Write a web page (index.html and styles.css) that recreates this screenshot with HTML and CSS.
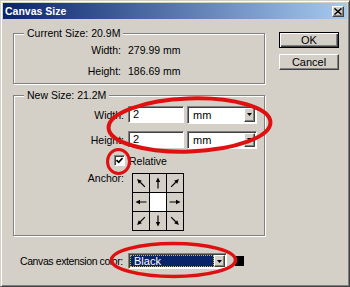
FILE: index.html
```html
<!DOCTYPE html>
<html>
<head>
<meta charset="utf-8">
<link rel="stylesheet" href="styles.css">
</head>
<body>
<div class="window">
  <div class="titlebar">
    <span class="title">Canvas Size</span>
    <span class="close"><svg viewBox="0 0 8 7" width="8" height="7"><path d="M0.5 0.5 L7.5 6.5 M7.5 0.5 L0.5 6.5" stroke="#000" stroke-width="1.5"/></svg></span>
  </div>
  <div class="content">
    <div class="main">
      <div class="group g1">
        <div class="legend">Current Size: 20.9M</div>
        <div class="kv">
          <span class="k">Width:</span><span class="v">279.99 mm</span>
          <span class="k">Height:</span><span class="v">186.69 mm</span>
        </div>
      </div>
      <div class="group g2">
        <div class="legend">New Size: 21.2M</div>
        <div class="fields">
          <div class="frow">
            <span class="flabel">Width:</span>
            <span class="input">2</span>
            <span class="select"><span class="sel-text">mm</span><span class="sel-btn"><svg viewBox="0 0 5 3" width="5" height="3"><path d="M0 0H5L2.5 3Z"/></svg></span></span>
          </div>
          <div class="frow">
            <span class="flabel">Height:</span>
            <span class="input">2</span>
            <span class="select"><span class="sel-text">mm</span><span class="sel-btn"><svg viewBox="0 0 5 3" width="5" height="3"><path d="M0 0H5L2.5 3Z"/></svg></span></span>
          </div>
          <div class="crow">
            <span class="checkbox"><svg viewBox="0 0 7 7" width="7" height="7"><path d="M0.5 3 L2.7 5.3 L6.5 1" fill="none" stroke="#000" stroke-width="1.6"/></svg></span>
            <span class="ctext">Relative</span>
          </div>
          <div class="arow">
            <span class="alabel">Anchor:</span>
            <div class="anchor">
              <span class="cell"><svg class="arr d-nw" viewBox="0 0 12 12"><path d="M6 0.5 L3.8 5 L8.2 5 Z"/><path d="M6 5 V11.5" stroke="#000" stroke-width="1.2"/></svg></span>
              <span class="cell"><svg class="arr d-n" viewBox="0 0 12 12"><path d="M6 0.5 L3.8 5 L8.2 5 Z"/><path d="M6 5 V11.5" stroke="#000" stroke-width="1.2"/></svg></span>
              <span class="cell"><svg class="arr d-ne" viewBox="0 0 12 12"><path d="M6 0.5 L3.8 5 L8.2 5 Z"/><path d="M6 5 V11.5" stroke="#000" stroke-width="1.2"/></svg></span>
              <span class="cell"><svg class="arr d-w" viewBox="0 0 12 12"><path d="M6 0.5 L3.8 5 L8.2 5 Z"/><path d="M6 5 V11.5" stroke="#000" stroke-width="1.2"/></svg></span>
              <span class="cell center"></span>
              <span class="cell"><svg class="arr d-e" viewBox="0 0 12 12"><path d="M6 0.5 L3.8 5 L8.2 5 Z"/><path d="M6 5 V11.5" stroke="#000" stroke-width="1.2"/></svg></span>
              <span class="cell"><svg class="arr d-sw" viewBox="0 0 12 12"><path d="M6 0.5 L3.8 5 L8.2 5 Z"/><path d="M6 5 V11.5" stroke="#000" stroke-width="1.2"/></svg></span>
              <span class="cell"><svg class="arr d-s" viewBox="0 0 12 12"><path d="M6 0.5 L3.8 5 L8.2 5 Z"/><path d="M6 5 V11.5" stroke="#000" stroke-width="1.2"/></svg></span>
              <span class="cell"><svg class="arr d-se" viewBox="0 0 12 12"><path d="M6 0.5 L3.8 5 L8.2 5 Z"/><path d="M6 5 V11.5" stroke="#000" stroke-width="1.2"/></svg></span>
            </div>
          </div>
        </div>
      </div>
      <div class="ext-row">
        <span class="ext-label">Canvas extension color:</span>
        <span class="select ext-select"><span class="sel-text selected"><span class="focus">Black</span></span><span class="sel-btn"><svg viewBox="0 0 5 3" width="5" height="3"><path d="M0 0H5L2.5 3Z"/></svg></span></span>
        <span class="swatch"></span>
      </div>
    </div>
    <div class="buttons">
      <span class="btn default">OK</span>
      <span class="btn">Cancel</span>
    </div>
  </div>
  <svg class="marks" viewBox="0 0 350 287" width="350" height="287">
    <ellipse cx="189.5" cy="125" rx="81" ry="26.5" transform="rotate(-2 189.5 125)" fill="none" stroke="#e01010" stroke-width="4"/>
    <ellipse cx="118.5" cy="161.5" rx="11" ry="12" fill="none" stroke="#e01010" stroke-width="3"/>
    <ellipse cx="173.5" cy="260" rx="62" ry="16.5" fill="none" stroke="#e01010" stroke-width="3.5"/>
  </svg>
</div>
</body>
</html>
```

FILE: styles.css
```css
* { box-sizing: border-box; }

body {
  margin: 0;
  font-family: "Liberation Sans", Arial, sans-serif;
  font-size: 10.5px;
  color: #000;
}

.window {
  position: relative;
  width: 350px;
  height: 287px;
  background: #d4d0c8;
  border: 1px solid;
  border-color: #d4d0c8 #404040 #404040 #d4d0c8;
  box-shadow: inset 1px 1px 0 #fff, inset -1px -1px 0 #808080;
  padding: 2px;
}

.titlebar {
  display: flex;
  align-items: center;
  height: 16px;
  background: linear-gradient(to right, #0a246a, #a6caf0);
  padding-left: 2px;
}

.title {
  color: #fff;
  font-weight: bold;
  font-size: 10.5px;
  line-height: 12px;
}

.close {
  margin-left: auto;
  margin-right: 3px;
  width: 12px;
  height: 11px;
  display: flex;
  align-items: center;
  justify-content: center;
  background: #d4d0c8;
  border: 1px solid;
  border-color: #fff #404040 #404040 #fff;
  box-shadow: inset -1px -1px 0 #808080;
}

.content {
  display: flex;
  padding-left: 10px;
}

.main {
  width: 252px;
  padding-top: 14px;
}

.group {
  border: 1px solid #808080;
  box-shadow: 1px 1px 0 #fff, inset 1px 1px 0 #fff;
}

.legend {
  width: fit-content;
  margin: -7px 0 0 10px;
  padding: 0 3px;
  background: #d4d0c8;
  line-height: 12px;
}

.kv {
  display: grid;
  grid-template-columns: 107px auto;
  grid-auto-rows: 21px;
  column-gap: 7px;
  align-items: center;
  padding-bottom: 2px;
}

.k { text-align: right; }

.g2 { margin-top: 11px; }

.fields {
  padding-top: 5px;
  padding-bottom: 4px;
}

.frow {
  display: flex;
  align-items: center;
  height: 17px;
}

.frow + .frow { margin-top: 8px; }

.flabel {
  width: 110px;
  margin-right: 4px;
  text-align: right;
}

.input {
  width: 56px;
  height: 17px;
  background: #fff;
  border: 1px solid;
  border-color: #808080 #fff #fff #808080;
  box-shadow: inset 1px 1px 0 #404040;
  padding-left: 4px;
  line-height: 15px;
  font-size: 11px;
}

.select {
  display: flex;
  width: 70px;
  height: 18px;
  margin-left: 3px;
  background: #fff;
  border: 1px solid;
  border-color: #808080 #fff #fff #808080;
  box-shadow: inset 1px 1px 0 #404040;
  padding: 1px;
}

.sel-text {
  flex: 1;
  padding-left: 4px;
  line-height: 14px;
  font-size: 11px;
}

.sel-btn {
  width: 11px;
  display: flex;
  align-items: center;
  justify-content: center;
  background: #d4d0c8;
  border: 1px solid;
  border-color: #fff #404040 #404040 #fff;
  box-shadow: inset -1px -1px 0 #808080;
}

.crow {
  display: flex;
  align-items: center;
  margin-top: 7px;
  padding-left: 100px;
  height: 11px;
}

.checkbox {
  width: 11px;
  height: 11px;
  display: flex;
  align-items: center;
  justify-content: center;
  background: #fff;
  border: 1px solid;
  border-color: #808080 #fff #fff #808080;
  box-shadow: inset 1px 1px 0 #404040;
}

.ctext {
  margin-left: 4px;
  line-height: 12px;
}

.arow {
  display: flex;
  align-items: flex-start;
  margin-top: 7px;
}

.alabel {
  width: 110px;
  text-align: right;
  line-height: 12px;
  margin-top: -1px;
}

.anchor {
  margin-left: 8px;
  display: grid;
  grid-template-columns: repeat(3, 16px);
  grid-template-rows: repeat(3, 18px);
  gap: 1px;
  padding: 1px;
  background: #000;
}

.cell {
  display: flex;
  align-items: center;
  justify-content: center;
  background: #d4d0c8;
}

.cell.center { background: #fff; }

.arr {
  width: 12px;
  height: 12px;
}

.d-n { transform: rotate(0deg); }
.d-ne { transform: rotate(45deg); }
.d-e { transform: rotate(90deg); }
.d-se { transform: rotate(135deg); }
.d-s { transform: rotate(180deg); }
.d-sw { transform: rotate(225deg); }
.d-w { transform: rotate(270deg); }
.d-nw { transform: rotate(315deg); }

.ext-row {
  display: flex;
  align-items: center;
  margin-top: 17px;
  padding-left: 7px;
}

.ext-label {
  width: 108px;
  flex: none;
  white-space: nowrap;
  letter-spacing: -0.4px;
}

.ext-select {
  width: 99px;
  height: 16px;
  margin-left: 0;
}

.ext-select .sel-text { padding-left: 0; }

.selected {
  background: #0a246a;
  color: #fff;
  display: flex;
}

.focus {
  flex: 1;
  border: 1px dotted #c8b060;
  padding-left: 3px;
  line-height: 10px;
}

.swatch {
  width: 9px;
  height: 10px;
  margin-left: 8px;
  background: #000;
}

.buttons {
  display: flex;
  flex-direction: column;
  margin-left: 14px;
  padding-top: 13px;
}

.btn {
  width: 60px;
  height: 16px;
  display: flex;
  align-items: center;
  justify-content: center;
  background: #d4d0c8;
  border: 1px solid;
  border-color: #fff #404040 #404040 #fff;
  box-shadow: inset -1px -1px 0 #808080;
  font-size: 11px;
}

.btn + .btn { margin-top: 6px; }

.btn.default {
  border-color: #000;
  box-shadow: inset 1px 1px 0 #fff, inset -1px -1px 0 #404040, inset -2px -2px 0 #808080;
}

.marks {
  position: absolute;
  left: -1px;
  top: -1px;
  pointer-events: none;
}
```
